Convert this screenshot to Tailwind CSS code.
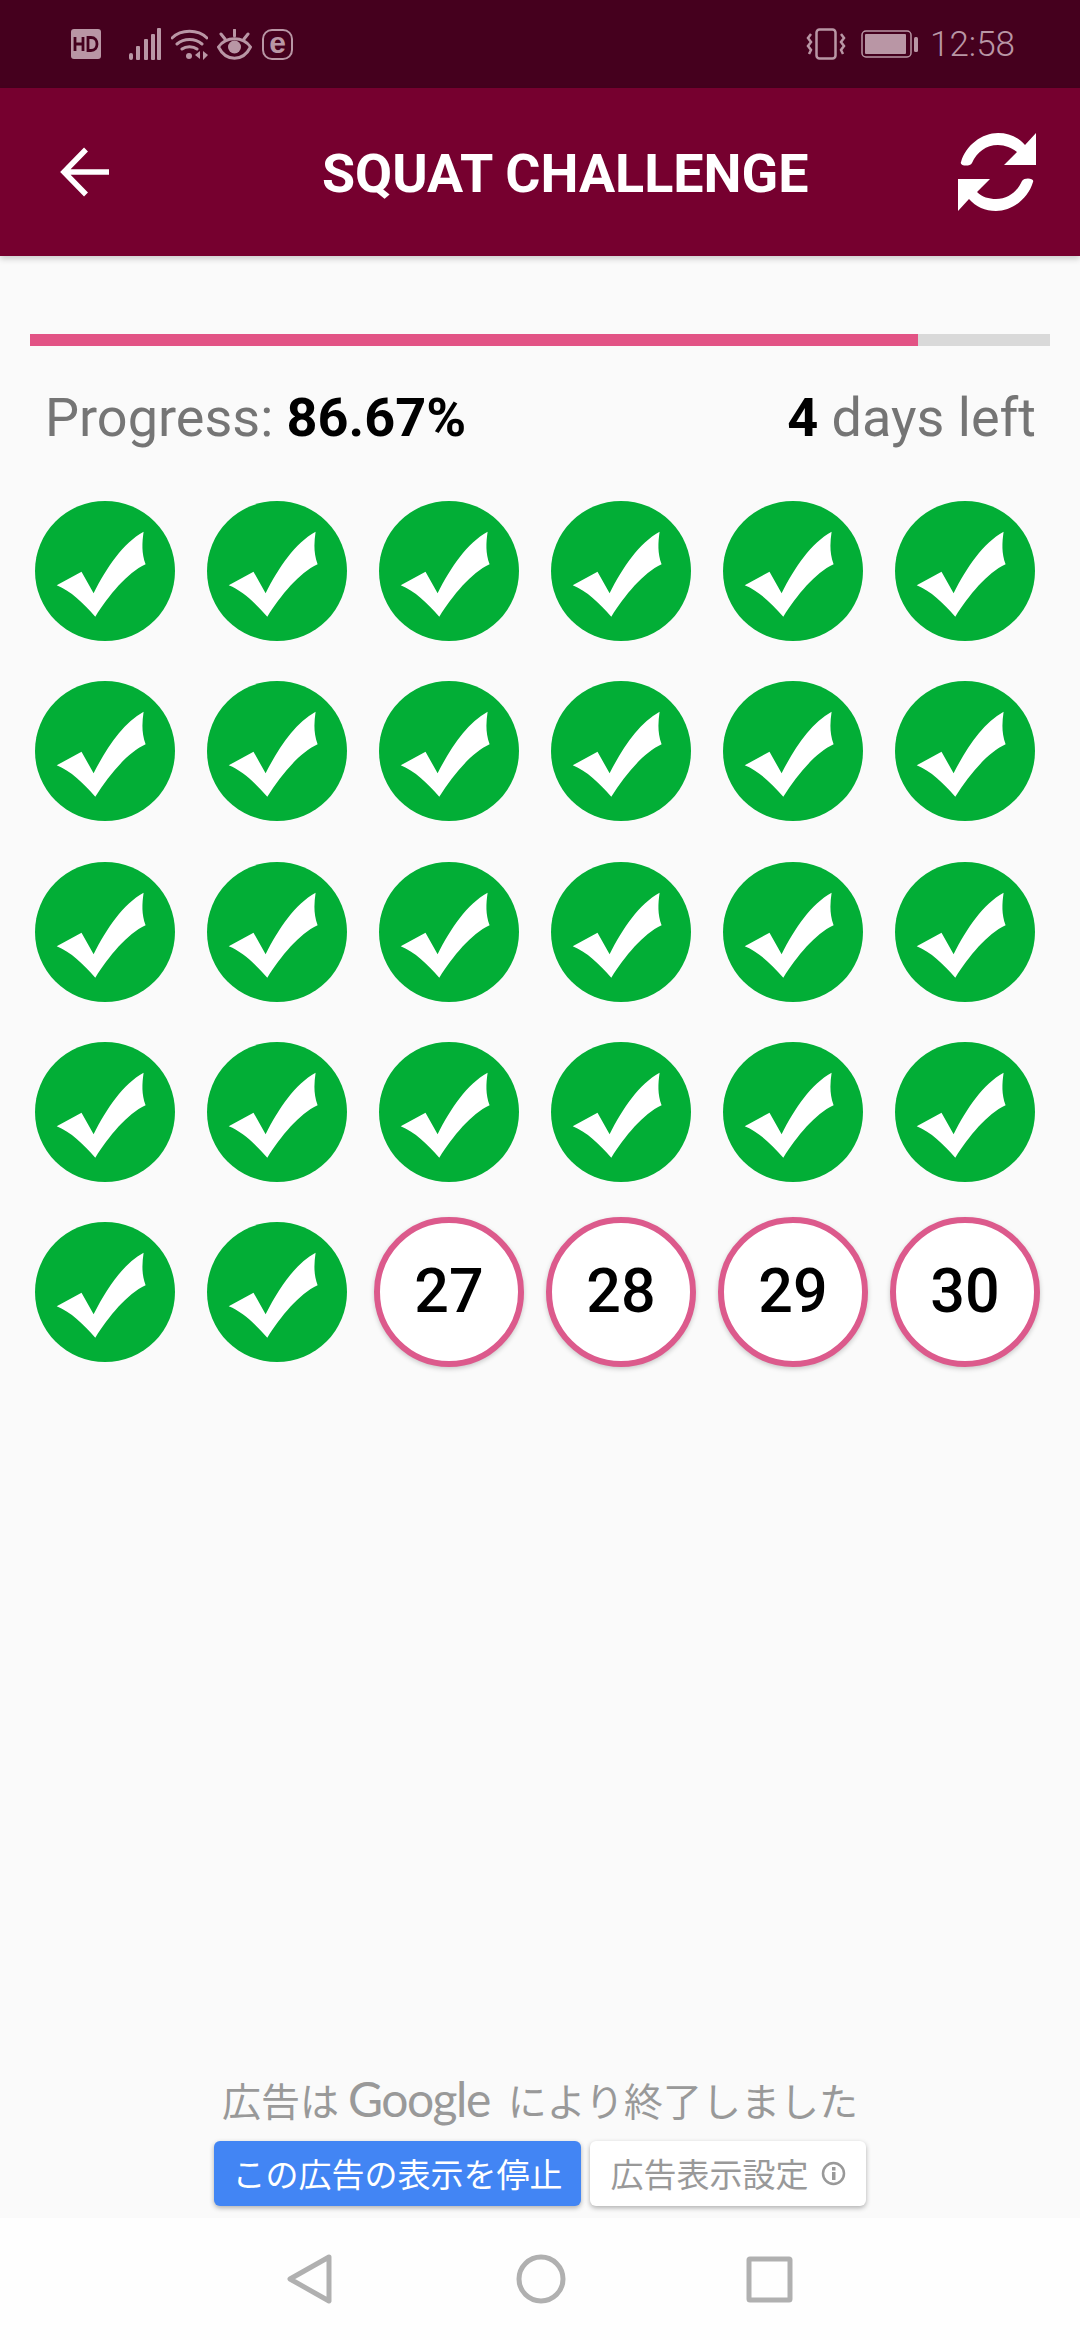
<!DOCTYPE html>
<html><head><meta charset="utf-8"><script src="https://cdn.jsdelivr.net/npm/@tailwindcss/browser@4"></script></head>
<body class="m-0">
<svg width="0" height="0" class="absolute">
<symbol id="done" viewBox="0 0 140 140"><circle cx="70" cy="70" r="70" fill="#02ae36"/><path fill="#fff" d="M108.6 30.7C88 42 72 66 58.6 92.3L46.5 70.7 21.7 84.3C36 90 48 102 60.3 115.7 74 94 92 72 110.6 63.3 106.5 52 107 42 108.6 30.7Z"/></symbol>
</svg>
<div class="w-[1080px] h-[2340px] flex flex-col overflow-hidden bg-[#fafafa] font-['Roboto',sans-serif]">
  <div class="h-[88px] bg-[#45001e] relative flex items-center text-[#b996a5] shrink-0">
    <div class="flex items-center ml-[71px]">
      <svg width="30" height="30" viewBox="0 0 30 30"><rect width="30" height="30" rx="3" fill="#b996a5"/><path fill="none" stroke="#45001e" stroke-width="2.800" d="M4 8v14M12 8v14M4 15h8M17 8.500v13h3c4 0 6-3 6-6.500s-2-6.500-6-6.500z"/></svg>
      <svg class="ml-[28px]" width="32" height="32" viewBox="0 0 32 32"><g fill="#b996a5"><rect x="0" y="25" width="4" height="7" rx="2"/><rect x="7" y="18" width="4" height="14" rx="1"/><rect x="15" y="11" width="4" height="21" rx="1"/><rect x="28" y="0" width="4" height="32" rx="1"/><rect x="22" y="6" width="4" height="26" rx="1"/></g></svg>
      <svg class="ml-[10px]" width="37" height="31" viewBox="0 0 37 31" fill="none" stroke="#b996a5" stroke-width="3" stroke-linecap="round"><path d="M1 9C10 0 27 0 36 9M6 15c7-6 18-6 25 0M11 20c4-3 11-3 15 0"/><circle cx="18" cy="27" r="3" fill="#b996a5" stroke="none"/><path fill="#b996a5" stroke="none" d="M29 22v8l-5-4zM32 22l5 4-5 5z"/></svg>
      <svg class="ml-[9px]" width="35" height="31" viewBox="0 0 35 31" fill="none" stroke="#b996a5" stroke-width="3"><path d="M1.5 18C9 7 26 7 33.5 18 26 33 9 33 1.5 18Z"/><circle cx="17.500" cy="18" r="6.500" fill="#b996a5" stroke="none"/><path stroke-linecap="round" d="M17.500 1v6M4 5l4 5M31 5l-4 5"/></svg>
      <div class="ml-[10px] w-[31px] h-[31px] rounded-[10px] border-2 border-[#b996a5] flex items-center justify-center text-[30px] leading-none font-bold font-['Liberation_Sans',sans-serif] pb-[3px]">e</div>
    </div>
    <div class="flex items-center ml-auto mr-[65px]">
      <svg width="40" height="32" viewBox="0 0 40 32" fill="none" stroke="#b996a5" stroke-width="2.500"><rect x="10.500" y="1.500" width="19" height="29" rx="3"/><path d="M5 6 2 10l3 4-3 4 3 4-2 4M35 6l3 4-3 4 3 4-3 4 2 4"/></svg>
      <svg class="ml-[15px]" width="57" height="28" viewBox="0 0 57 28"><rect x="1" y="1" width="49" height="26" rx="4" fill="none" stroke="#b996a5" stroke-width="1.500"/><rect x="4" y="4" width="41" height="20" rx="1" fill="#b996a5"/><rect x="53" y="7" width="4" height="15" rx="1.500" fill="#b996a5"/></svg>
      <span class="ml-[12px] text-[35px] leading-none font-light">12:58</span>
    </div>
  </div>
  <div class="h-[168px] bg-[#76002f] shadow-[0_3px_6px_rgba(0,0,0,0.18)] relative z-10 flex items-center shrink-0">
    <svg class="ml-[60px]" width="49" height="50" viewBox="0 0 49 50" fill="none" stroke="#fff" stroke-width="5.500"><path d="M26 2.500 4 25l22 22.500M4 25h45"/></svg>
    <div class="ml-[213px] text-[53.800px] font-bold text-white leading-none pt-[3px] whitespace-nowrap">SQUAT CHALLENGE</div>
    <svg class="ml-auto mr-[44px]" width="78" height="78" viewBox="0 0 78 78" fill="#fff"><path d="M3 29C8 12 24 0 40 0c11 0 20 4 27 12l11-12v32H46l13-13C54 15 47 12 40 12 28 12 19 19 14 30c-2 4-13 3-11-1Z"/><path d="M75 49C70 66 54 78 38 78c-11 0-20-4-27-12L0 78V46h32L19 59c5 5 12 7 19 7 12 0 21-7 26-18 2-4 13-3 11 1Z"/></svg>
  </div>
  <main class="flex-1 pt-[78px] relative">
    <div class="mx-[30px] h-[12px] bg-[#d9d9d9]"><div class="w-[888px] h-full bg-[#e25385]"></div></div>
    <div class="mt-[42px] h-[60px] flex justify-between items-center pl-[45px] pr-[44px] text-[54px] leading-none text-[#757575] whitespace-nowrap">
      <div>Progress: <b class="font-bold text-black">86.67%</b></div>
      <div><b class="font-bold text-black">4</b> days left</div>
    </div>
    <div class="mt-[33px] ml-[19px] grid grid-cols-[repeat(6,172px)] auto-rows-[180.25px]">
      <div class="flex items-center justify-center h-[180px]"><svg class="w-[140px] h-[140px]"><use href="#done"/></svg></div>
      <div class="flex items-center justify-center h-[180px]"><svg class="w-[140px] h-[140px]"><use href="#done"/></svg></div>
      <div class="flex items-center justify-center h-[180px]"><svg class="w-[140px] h-[140px]"><use href="#done"/></svg></div>
      <div class="flex items-center justify-center h-[180px]"><svg class="w-[140px] h-[140px]"><use href="#done"/></svg></div>
      <div class="flex items-center justify-center h-[180px]"><svg class="w-[140px] h-[140px]"><use href="#done"/></svg></div>
      <div class="flex items-center justify-center h-[180px]"><svg class="w-[140px] h-[140px]"><use href="#done"/></svg></div>
      <div class="flex items-center justify-center h-[180px]"><svg class="w-[140px] h-[140px]"><use href="#done"/></svg></div>
      <div class="flex items-center justify-center h-[180px]"><svg class="w-[140px] h-[140px]"><use href="#done"/></svg></div>
      <div class="flex items-center justify-center h-[180px]"><svg class="w-[140px] h-[140px]"><use href="#done"/></svg></div>
      <div class="flex items-center justify-center h-[180px]"><svg class="w-[140px] h-[140px]"><use href="#done"/></svg></div>
      <div class="flex items-center justify-center h-[180px]"><svg class="w-[140px] h-[140px]"><use href="#done"/></svg></div>
      <div class="flex items-center justify-center h-[180px]"><svg class="w-[140px] h-[140px]"><use href="#done"/></svg></div>
      <div class="flex items-center justify-center h-[180px]"><svg class="w-[140px] h-[140px]"><use href="#done"/></svg></div>
      <div class="flex items-center justify-center h-[180px]"><svg class="w-[140px] h-[140px]"><use href="#done"/></svg></div>
      <div class="flex items-center justify-center h-[180px]"><svg class="w-[140px] h-[140px]"><use href="#done"/></svg></div>
      <div class="flex items-center justify-center h-[180px]"><svg class="w-[140px] h-[140px]"><use href="#done"/></svg></div>
      <div class="flex items-center justify-center h-[180px]"><svg class="w-[140px] h-[140px]"><use href="#done"/></svg></div>
      <div class="flex items-center justify-center h-[180px]"><svg class="w-[140px] h-[140px]"><use href="#done"/></svg></div>
      <div class="flex items-center justify-center h-[180px]"><svg class="w-[140px] h-[140px]"><use href="#done"/></svg></div>
      <div class="flex items-center justify-center h-[180px]"><svg class="w-[140px] h-[140px]"><use href="#done"/></svg></div>
      <div class="flex items-center justify-center h-[180px]"><svg class="w-[140px] h-[140px]"><use href="#done"/></svg></div>
      <div class="flex items-center justify-center h-[180px]"><svg class="w-[140px] h-[140px]"><use href="#done"/></svg></div>
      <div class="flex items-center justify-center h-[180px]"><svg class="w-[140px] h-[140px]"><use href="#done"/></svg></div>
      <div class="flex items-center justify-center h-[180px]"><svg class="w-[140px] h-[140px]"><use href="#done"/></svg></div>
      <div class="flex items-center justify-center h-[180px]"><svg class="w-[140px] h-[140px]"><use href="#done"/></svg></div>
      <div class="flex items-center justify-center h-[180px]"><svg class="w-[140px] h-[140px]"><use href="#done"/></svg></div>
      <div class="flex items-center justify-center h-[180px]"><div class="w-[150px] h-[150px] rounded-full border-[6px] border-[#dc5a8c] bg-white shadow-[0_2px_5px_rgba(0,0,0,0.2)] flex items-center justify-center text-[61px] font-medium text-black">27</div></div>
      <div class="flex items-center justify-center h-[180px]"><div class="w-[150px] h-[150px] rounded-full border-[6px] border-[#dc5a8c] bg-white shadow-[0_2px_5px_rgba(0,0,0,0.2)] flex items-center justify-center text-[61px] font-medium text-black">28</div></div>
      <div class="flex items-center justify-center h-[180px]"><div class="w-[150px] h-[150px] rounded-full border-[6px] border-[#dc5a8c] bg-white shadow-[0_2px_5px_rgba(0,0,0,0.2)] flex items-center justify-center text-[61px] font-medium text-black">29</div></div>
      <div class="flex items-center justify-center h-[180px]"><div class="w-[150px] h-[150px] rounded-full border-[6px] border-[#dc5a8c] bg-white shadow-[0_2px_5px_rgba(0,0,0,0.2)] flex items-center justify-center text-[61px] font-medium text-black">30</div></div>
    </div>
  </main>
  <div class="h-[142px] shrink-0 font-['Noto_Sans_CJK_JP',sans-serif]">
    <div class="h-[62px] pb-[16px] flex items-center pl-[222px] text-[39px] leading-none text-[#999] whitespace-nowrap">広告は<span class="ml-[9px] mr-[18px] text-[48px] font-['Lato',sans-serif] font-normal tracking-[-1.5px]">Google</span>により終了しました</div>
    <div class="mt-[3px] flex items-stretch pl-[214px] h-[65px]">
      <div class="w-[367px] rounded-[6px] bg-[#4285f4] text-white text-[33px] leading-none flex items-center justify-center shadow-[0_2px_5px_rgba(0,0,0,0.3)]">この広告の表示を停止</div>
      <div class="ml-[9px] w-[276px] rounded-[6px] bg-white text-[#999] text-[33px] leading-none flex items-center justify-center shadow-[0_2px_5px_rgba(0,0,0,0.3)]">広告表示設定<svg class="ml-[12px]" width="25" height="25" viewBox="0 0 25 25"><circle cx="12.500" cy="12.500" r="10.500" fill="none" stroke="#999" stroke-width="2.500"/><rect x="11" y="11" width="3.500" height="8" fill="#999"/><rect x="11" y="6" width="3.500" height="3.500" fill="#999"/></svg></div>
    </div>
  </div>
  <nav class="h-[122px] shrink-0 bg-[#fefefe] relative flex items-center">
    <svg class="ml-[286px]" width="46" height="50" viewBox="0 0 46 50" fill="none" stroke="#b0b0b0" stroke-width="5" stroke-linejoin="round"><path d="M43 3 4 25l39 22z"/></svg>
    <svg class="ml-[184px]" width="50" height="50" viewBox="0 0 50 50" fill="none" stroke="#b0b0b0" stroke-width="5"><circle cx="25" cy="25" r="22"/></svg>
    <svg class="ml-[180px]" width="47" height="47" viewBox="0 0 47 47" fill="none" stroke="#b0b0b0" stroke-width="5" stroke-linejoin="round"><rect x="3" y="3" width="41" height="41" rx="1"/></svg>
  </nav>
</div>
</body></html>
